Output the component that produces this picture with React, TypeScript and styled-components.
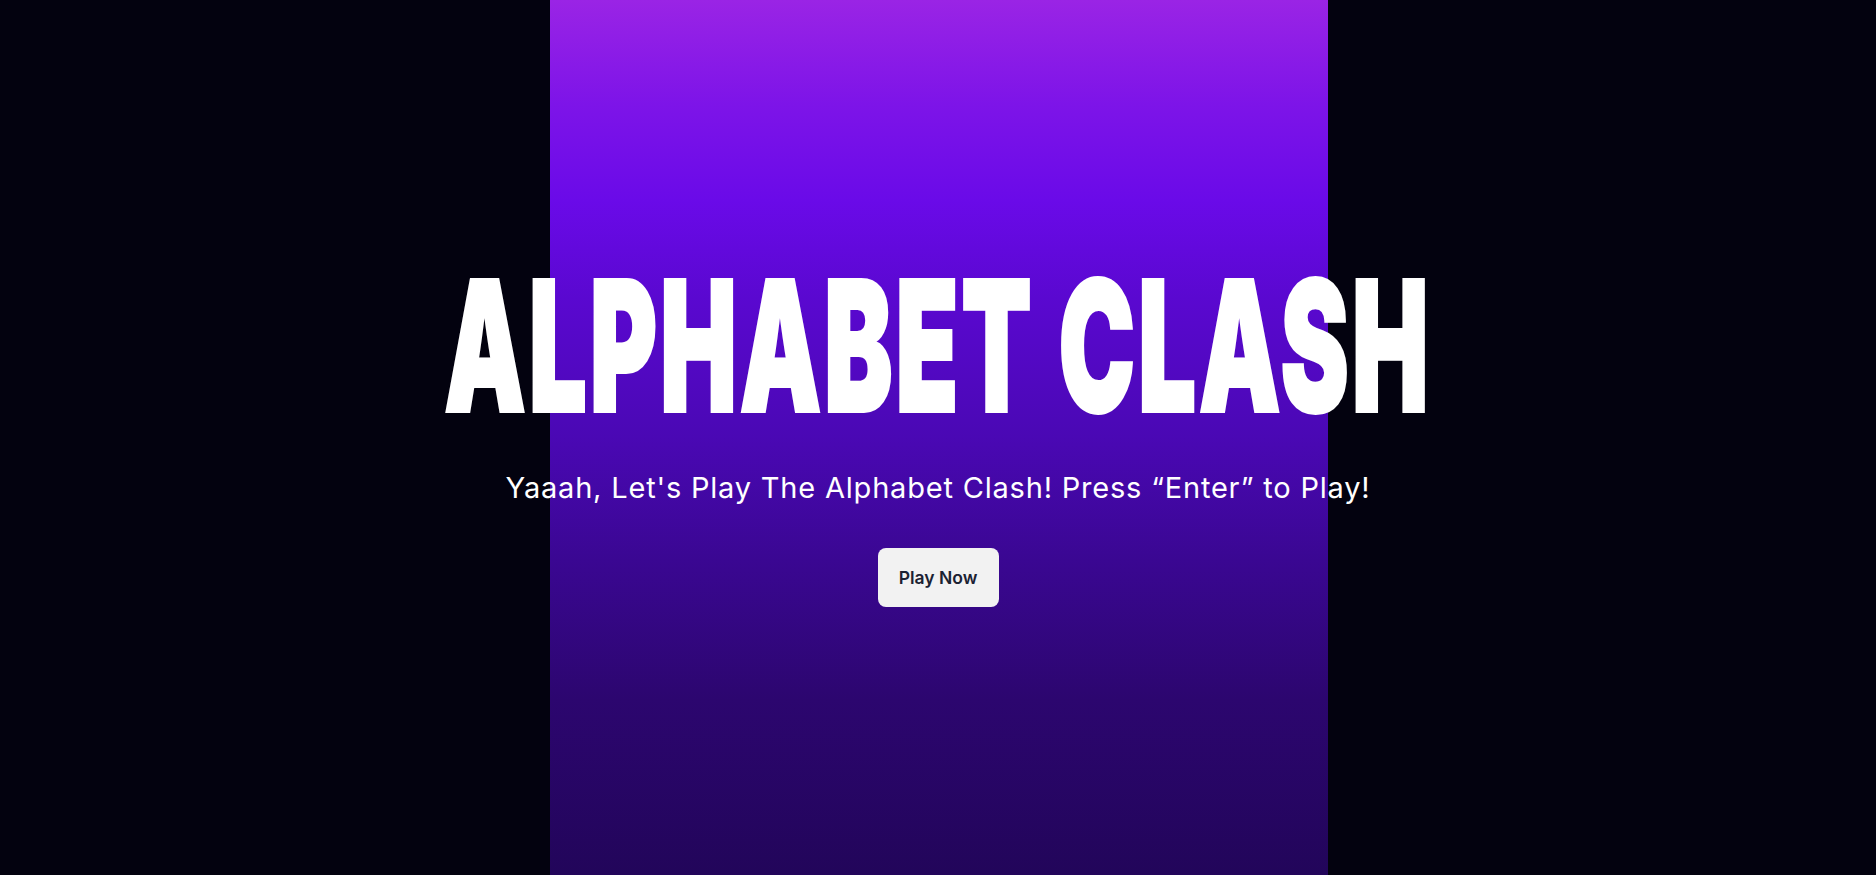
import React from "react";
import styled, { createGlobalStyle } from "styled-components";

const GlobalStyle = createGlobalStyle`
  html, body {
    margin: 0;
    padding: 0;
    background: #03020f;
  }
  * { box-sizing: border-box; }
`;

const Page = styled.main`
  width: 100%;
  height: 875px;
  overflow: hidden;
  display: flex;
  flex-direction: column;
  align-items: center;
  padding-top: 256px;
  background:
    linear-gradient(
      180deg,
      #9a24e5 0%,
      #7d14e8 12%,
      #6a0ae8 23%,
      #5a08d0 34%,
      #4a08b4 50%,
      #3a0792 64%,
      #2c066f 80%,
      #22055a 100%
    ) calc(50% + 1px) 0 / 778px 100% no-repeat,
    #03020f;
`;

const Title = styled.h1`
  margin: 0;
  font-family: Inter, "Liberation Sans", sans-serif;
  font-weight: 900;
  font-size: 180px;
  line-height: 180px;
  height: 180px;
  color: #ffffff;
  letter-spacing: 6px;
  white-space: nowrap;
  transform: scaleX(0.566);
  -webkit-text-stroke: 4px #ffffff;
  display: inline-block;
`;

const Subtitle = styled.p`
  margin: 35px 0 0;
  font-family: Inter, "Open Sans", sans-serif;
  font-weight: 400;
  font-size: 29px;
  line-height: 34px;
  letter-spacing: 0.8px;
  color: #ffffff;
  white-space: nowrap;
`;

const PlayButton = styled.button`
  margin-top: 43px;
  width: 121px;
  height: 59px;
  border: none;
  border-radius: 8px;
  background: #f2f2f2;
  color: #1b2233;
  font-family: Inter, "Open Sans", sans-serif;
  font-weight: 600;
  font-size: 17.5px;
  cursor: pointer;
`;

export default function App() {
  return (
    <>
      <GlobalStyle />
      <Page>
        <Title>ALPHABET CLASH</Title>
        <Subtitle>Yaaah, Let's Play The Alphabet Clash! Press “Enter” to Play!</Subtitle>
        <PlayButton>Play Now</PlayButton>
      </Page>
    </>
  );
}
